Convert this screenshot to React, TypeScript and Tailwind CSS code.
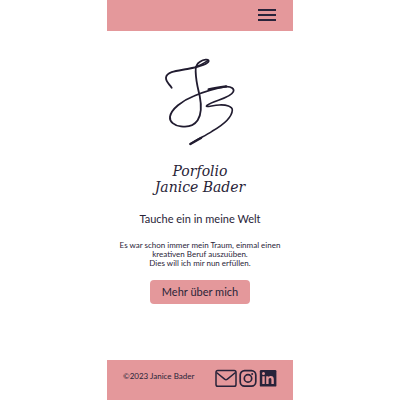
import React from "react";

function Monogram() {
  return (
    <svg
      viewBox="0 0 300 300"
      className="size-[100px]"
      fill="none"
      stroke="#211c30"
      strokeWidth="5.5"
      strokeLinecap="round"
      strokeLinejoin="round"
      role="img"
      aria-label="JB"
    >
      <path d="M65 110C56 97 47 92 48 80C50 61 85 59 112 54C143 48 174 40 176 30C176 23 160 26 150 32C140 38 136 46 137 62C138 93 143 108 149 134C155 165 155 190 143 208C132 224 112 229 93 226C72 224 58 212 60 197C64 174 96 149 132 135C165 121 197 112 228 107" />
      <path d="M137 47C150 45 163 36 173 29" strokeWidth="4" />
      <path d="M176 115C195 110 211 108 228 106" strokeWidth="7" />
      <path
        d="M228 107C244 106 254 114 250 122C241 143 188 148 171 163C162 171 187 163 208 162C229 161 247 166 247 177C246 200 219 222 186 241C164 255 142 265 121 279"
        strokeWidth="5"
      />
      <path d="M153 261C142 267 132 273 121 279" strokeWidth="7" />
    </svg>
  );
}

export default function App() {
  return (
    <div className="min-h-screen bg-white font-['Lato',sans-serif] text-[#292438]">
      <div className="mx-auto flex min-h-screen w-full max-w-[186px] flex-col">
        <header className="flex h-[31px] justify-end bg-[#e4989b] pr-4">
          <button type="button" aria-label="Menü" className="flex h-[30px] w-5 items-center">
            <svg viewBox="0 0 20 14" className="h-3.5 w-5" fill="#28233a">
              <path d="M1 1h18v2H1zM1 6h18v2H1zM1 11h18v2H1z" />
            </svg>
          </button>
        </header>

        <main className="flex grow flex-col items-center pt-5 text-center">
          <Monogram />
          <p className="mt-3 font-['DejaVu_Serif',serif] text-sm leading-4 italic">
            Porfolio
            <br />
            Janice Bader
          </p>
          <h1 className="mt-4 text-[11px] leading-4">Tauche ein in meine Welt</h1>
          <p className="mt-3.5 text-[8px] leading-[9px] whitespace-nowrap">
            Es war schon immer mein Traum, einmal einen
            <br />
            kreativen Beruf auszuüben.
            <br />
            Dies will ich mir nun erfüllen.
          </p>
          <button
            type="button"
            className="mt-3 h-6 w-[100px] rounded bg-[#e4989b] text-[11px] whitespace-nowrap"
          >
            Mehr über mich
          </button>
        </main>

        <footer className="flex h-10 justify-between bg-[#e4989b] pr-4 pl-4">
          <p className="pt-3 text-[8px] leading-[9px] whitespace-nowrap">©2023 Janice Bader</p>
          <nav className="flex gap-0.5 pt-2" aria-label="Kontakt">
            <a href="#mail" aria-label="E-Mail">
              <svg viewBox="0 0 22 20" className="h-5 w-[22px]" fill="none" stroke="#28233a" strokeWidth="1.5" strokeLinejoin="round">
                <rect x="1" y="2.6" width="20" height="15.6" rx="1.8" />
                <path d="M1.5 4.5L9.6 11.2Q11 12.2 12.4 11.2L20.5 4.5" />
              </svg>
            </a>
            <a href="#instagram" aria-label="Instagram">
              <svg viewBox="0 0 18 20" className="h-5 w-[18px]" fill="none" stroke="#28233a" strokeWidth="1.7">
                <rect x="1.2" y="2.6" width="15.6" height="15.6" rx="4.4" />
                <circle cx="9" cy="10.4" r="3.7" />
                <circle cx="13.2" cy="6.1" r="1" fill="#28233a" stroke="none" />
              </svg>
            </a>
            <a href="#linkedin" aria-label="LinkedIn">
              <svg viewBox="0 0 18 20" className="h-5 w-[18px]">
                <rect x="0.8" y="2" width="16.6" height="16.6" rx="1.2" fill="#28233a" />
                <circle cx="4.5" cy="5.6" r="1.5" fill="#e4989b" />
                <path d="M3.3 8.2h2.4v7.9H3.3zM7.2 8.2h2.3v1.1c.5-.8 1.3-1.3 2.4-1.3 2.3 0 2.9 1.5 2.9 3.6v4.5h-2.4v-4c0-1.1-.1-2-1.3-2s-1.5.9-1.5 2v4H7.2z" fill="#e4989b" />
              </svg>
            </a>
          </nav>
        </footer>
      </div>
    </div>
  );
}
